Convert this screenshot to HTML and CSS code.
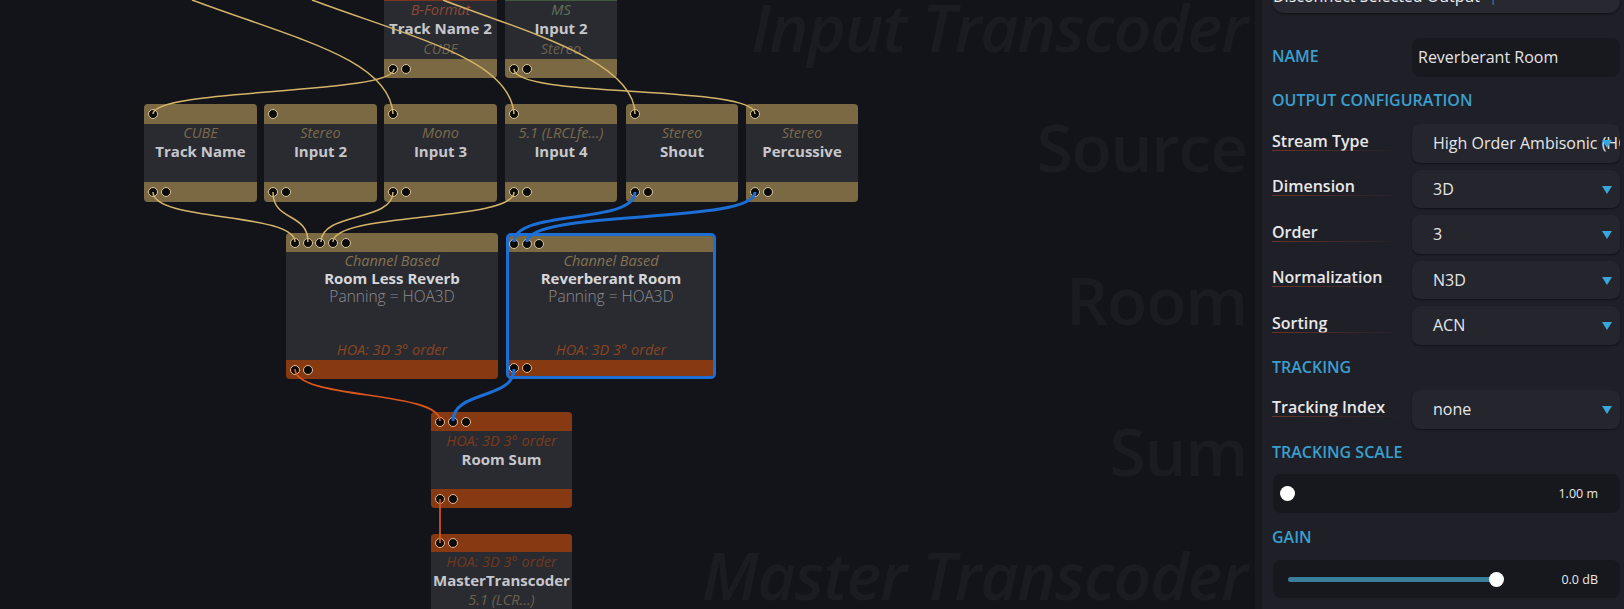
FILE: index.html
```html
<!DOCTYPE html>
<html>
<head>
<meta charset="utf-8">
<title>Graph</title>
<link rel="stylesheet" href="styles.css">
</head>
<body>
<div class="app">
  <div class="canvas">
    <div class="lane lane-input it">Input Transcoder</div>
    <div class="lane lane-source">Source</div>
    <div class="lane lane-room">Room</div>
    <div class="lane lane-sum">Sum</div>
    <div class="lane lane-master it">Master Transcoder</div>

    <!-- row 1: input transcoders -->
    <div class="node w-s h-top p-t1">
      <div class="bar bar-top hoa"></div>
      <div class="body">
        <div class="fmt c-red">B-Format</div>
        <div class="title">Track Name 2</div>
        <div class="fmt c-out out-line">CUBE</div>
      </div>
      <div class="bar bar-bot"><i class="port"></i><i class="port"></i></div>
    </div>
    <div class="node w-s2 h-top p-t2">
      <div class="bar bar-top green"></div>
      <div class="body">
        <div class="fmt c-green">MS</div>
        <div class="title">Input 2</div>
        <div class="fmt c-out out-line">Stereo</div>
      </div>
      <div class="bar bar-bot"><i class="port"></i><i class="port"></i></div>
    </div>

    <!-- row 2: sources -->
    <div class="node w-s h-src p-s1">
      <div class="bar"><i class="port"></i></div>
      <div class="body"><div class="fmt">CUBE</div><div class="title">Track Name</div></div>
      <div class="bar"><i class="port"></i><i class="port"></i></div>
    </div>
    <div class="node w-s h-src p-s2">
      <div class="bar"><i class="port"></i></div>
      <div class="body"><div class="fmt">Stereo</div><div class="title">Input 2</div></div>
      <div class="bar"><i class="port"></i><i class="port"></i></div>
    </div>
    <div class="node w-s h-src p-s3">
      <div class="bar"><i class="port"></i></div>
      <div class="body"><div class="fmt">Mono</div><div class="title">Input 3</div></div>
      <div class="bar"><i class="port"></i><i class="port"></i></div>
    </div>
    <div class="node w-s2 h-src p-s4">
      <div class="bar"><i class="port"></i></div>
      <div class="body"><div class="fmt">5.1 (LRCLfe...)</div><div class="title">Input 4</div></div>
      <div class="bar"><i class="port"></i><i class="port"></i></div>
    </div>
    <div class="node w-s2 h-src p-s5">
      <div class="bar"><i class="port"></i></div>
      <div class="body"><div class="fmt">Stereo</div><div class="title">Shout</div></div>
      <div class="bar"><i class="port"></i><i class="port"></i></div>
    </div>
    <div class="node w-s2 h-src p-s6">
      <div class="bar"><i class="port"></i></div>
      <div class="body"><div class="fmt">Stereo</div><div class="title">Percussive</div></div>
      <div class="bar"><i class="port"></i><i class="port"></i></div>
    </div>

    <!-- row 3: rooms -->
    <div class="node room p-r1">
      <div class="bar bar-19 tight"><i class="port"></i><i class="port"></i><i class="port"></i><i class="port"></i><i class="port"></i></div>
      <div class="body">
        <div class="fmt c-ch">Channel Based</div>
        <div class="title bright t-room">Room Less Reverb</div>
        <div class="pan">Panning = HOA3D</div>
        <div class="fmt c-hoa bottom">HOA: 3D 3° order</div>
      </div>
      <div class="bar bar-19 hoa"><i class="port hp"></i><i class="port hp"></i></div>
    </div>
    <div class="node room selected p-r2">
      <div class="bar bar-16 tight"><i class="port"></i><i class="port"></i><i class="port"></i></div>
      <div class="body">
        <div class="fmt c-ch">Channel Based</div>
        <div class="title bright t-room">Reverberant Room</div>
        <div class="pan">Panning = HOA3D</div>
        <div class="fmt c-hoa bottom">HOA: 3D 3° order</div>
      </div>
      <div class="bar bar-16 hoa"><i class="port hp"></i><i class="port hp"></i></div>
    </div>

    <!-- row 4: sum -->
    <div class="node sum p-sum">
      <div class="bar bar-19 hoa"><i class="port hp"></i><i class="port hp"></i><i class="port hp"></i></div>
      <div class="body">
        <div class="fmt c-hoa2 lh19">HOA: 3D 3° order</div>
        <div class="title">Room Sum</div>
      </div>
      <div class="bar bar-19 hoa"><i class="port hp"></i><i class="port hp"></i></div>
    </div>

    <!-- row 5: master -->
    <div class="node master p-master">
      <div class="bar bar-18 hoa"><i class="port hp"></i><i class="port hp"></i></div>
      <div class="body">
        <div class="fmt c-hoa3 lh19">HOA: 3D 3° order</div>
        <div class="title lh19">MasterTranscoder</div>
        <div class="fmt c-out lh19">5.1 (LCR...)</div>
      </div>
    </div>

    <svg class="wires" width="1255" height="609" viewBox="0 0 1255 609">
      <g fill="none" stroke="#d4b469" stroke-width="1.5">
        <path d="M192,0 C300,40 390,60 393,114"/>
        <path d="M312,0 C420,40 510,60 514,114"/>
        <path d="M443,0 C520,30 635,60 635,114"/>
        <path d="M394,69 C394,95 153,88 153,114"/>
        <path d="M514,69 C514,99 755,84 755,114"/>
        <path d="M153,192 C153,222 295,212 295,242"/>
        <path d="M273,192 C273,222 308,212 308,242"/>
        <path d="M393,192 C393,222 321,212 321,242"/>
        <path d="M514,192 C514,222 333,212 333,242"/>
      </g>
      <g fill="none" stroke="#1c6fd6" stroke-width="3">
        <path d="M635,192 C635,225 514,209 514,242"/>
        <path d="M755,192 C755,225 527,209 527,242"/>
        <path d="M514,369 C514,400 453,390 453,421"/>
      </g>
      <g fill="none" stroke="#d9561e" stroke-width="1.7">
        <path d="M295,369 C295,400 440,390 440,421"/>
        <path d="M440,499 L440,543"/>
      </g>
    </svg>
  </div>

  <aside class="panel">
    <div class="disconnect">Disconnect Selected Output <span class="caret">|</span></div>

    <div class="row name-row">
      <div class="sec">NAME</div>
      <div class="input">Reverberant Room</div>
    </div>

    <div class="sec sec-oc">OUTPUT CONFIGURATION</div>

    <div class="row first">
      <div class="label">Stream Type</div>
      <div class="select"><span>High Order Ambisonic (HOA)</span><i class="tri"></i></div>
    </div>
    <div class="row">
      <div class="label">Dimension</div>
      <div class="select"><span>3D</span><i class="tri"></i></div>
    </div>
    <div class="row">
      <div class="label">Order</div>
      <div class="select"><span>3</span><i class="tri"></i></div>
    </div>
    <div class="row">
      <div class="label">Normalization</div>
      <div class="select"><span>N3D</span><i class="tri"></i></div>
    </div>
    <div class="row">
      <div class="label">Sorting</div>
      <div class="select"><span>ACN</span><i class="tri"></i></div>
    </div>

    <div class="sec sec-tr">TRACKING</div>
    <div class="row first-tr">
      <div class="label">Tracking Index</div>
      <div class="select"><span>none</span><i class="tri"></i></div>
    </div>

    <div class="sec sec-ts">TRACKING SCALE</div>
    <div class="slider s-scale">
      <div class="track"><i class="knob" style="left:0px"></i></div>
      <div class="val">1.00 m</div>
    </div>

    <div class="sec sec-gain">GAIN</div>
    <div class="slider s-gain">
      <div class="track"><i class="fill" style="width:209px"></i><i class="knob" style="left:209px"></i></div>
      <div class="val">0.0 dB</div>
    </div>
  </aside>
</div>
</body>
</html>
```

FILE: styles.css
```css
* { box-sizing: border-box; }
html, body { margin: 0; padding: 0; }
body {
  background: #131419;
  font-family: "Open Sans", "Noto Sans", sans-serif;
  overflow: hidden;
}
.app {
  display: flex;
  width: 1624px;
  height: 609px;
  overflow: hidden;
}

/* ---------- canvas ---------- */
.canvas {
  position: relative;
  flex: 0 0 1255px;
  height: 609px;
  overflow: hidden;
  background: #131419;
}
.lane {
  position: absolute;
  right: 8px;
  font-size: 66px;
  font-weight: 600;
  line-height: 68px;
  color: #1b1c22;
  white-space: nowrap;
  letter-spacing: -1.2px;
}
.lane.it { font-style: italic; }
.lane-input { top: -8px; }
.lane-source { top: 112px; }
.lane-room { top: 265px; }
.lane-sum { top: 416px; }
.lane-master { top: 540px; }

.wires {
  position: absolute;
  left: 0;
  top: 0;
  pointer-events: none;
}

.node {
  position: absolute;
  display: flex;
  flex-direction: column;
  border-radius: 4px;
  overflow: hidden;
  background: #2a2b30;
}
.w-s { width: 113px; }
.w-s2 { width: 112px; }
.h-src { height: 98px; }
.h-top { height: 97px; }

.p-t1 { left: 384px; top: -19px; }
.p-t2 { left: 505px; top: -19px; }
.p-s1 { left: 144px; top: 104px; }
.p-s2 { left: 264px; top: 104px; }
.p-s3 { left: 384px; top: 104px; }
.p-s4 { left: 505px; top: 104px; }
.p-s5 { left: 626px; top: 104px; }
.p-s6 { left: 746px; top: 104px; }
.p-r1 { left: 286px; top: 233px; width: 212px; height: 146px; }
.p-r2 { left: 506px; top: 233px; width: 210px; height: 146px; }
.p-sum { left: 431px; top: 412px; width: 141px; height: 96px; }
.p-master { left: 431px; top: 534px; width: 141px; height: 100px; }

.bar {
  flex: 0 0 20px;
  display: flex;
  align-items: center;
  gap: 3px;
  padding-left: 4px;
  background: #7b6944;
}
.bar-top { flex-basis: 20px; }
.bar-bot { flex-basis: 19px; }
.bar-19 { flex-basis: 19px; }
.bar-18 { flex-basis: 18px; }
.bar-16 { flex-basis: 16px; }
.bar.tight { gap: 2.7px; }
.bar.hoa { background: #873a12; }
.bar.green { background: #3f5a3c; }
.bar-top.hoa { background: #7a3422; }

.selected {
  border: 3px solid #1d6fd6;
  border-radius: 5px;
}
.selected .bar { padding-left: 0; }

.port {
  display: block;
  width: 10px;
  height: 10px;
  border-radius: 50%;
  background: #0a0a0b;
  border: 1.5px solid #d8c79e;
  flex: 0 0 10px;
}
.port.hp { border-color: #e8b898; }

.body {
  flex: 1;
  display: flex;
  flex-direction: column;
  align-items: center;
  text-align: center;
  min-height: 0;
}
.fmt {
  font-style: italic;
  font-size: 14.5px;
  line-height: 18px;
  color: #7a6a4b;
  white-space: nowrap;
}
.title {
  font-weight: 700;
  font-size: 15px;
  line-height: 18px;
  color: #c6c7cc;
  white-space: nowrap;
}
.title.bright { color: #d6d7db; }
.t-room { line-height: 16px; margin-bottom: 1px; }
.pan {
  font-size: 15.5px;
  line-height: 19px;
  color: #8c8d93;
  font-weight: 300;
  white-space: nowrap;
}
.lh19 { line-height: 19px; }
.c-red { color: #8c4937; }
.c-green { color: #5b7458; }
.c-out { color: #6a6150; }
.c-ch { color: #857250; }
.c-hoa { color: #8a4520; }
.c-hoa2 { color: #7c3a1c; }
.c-hoa3 { color: #70391f; }
.out-line { margin-top: auto; margin-bottom: 1px; }
.bottom { margin-top: auto; margin-bottom: 1px; }

/* ---------- side panel ---------- */
.panel {
  flex: 0 0 369px;
  width: 369px;
  min-width: 0;
  overflow: hidden;
  background: #1f2027;
  border-left: 7px solid #191a1f;
  padding: 0 4px 0 10px;
  display: flex;
  flex-direction: column;
  color: #e6e6e8;
}
.disconnect {
  margin-top: -25px;
  height: 38px;
  flex: 0 0 38px;
  border-radius: 12px;
  background: #272830;
  box-shadow: 0 1px 2px rgba(0,0,0,0.5);
  font-size: 16px;
  line-height: 34px;
  padding-top: 4px;
  padding-left: 1px;
  color: #f0f0f2;
  white-space: nowrap;
  overflow: hidden;
}
.caret { font-size: 10px; color: #9a9aa0; margin-left: 6px; }

.sec {
  font-size: 16px;
  font-weight: 600;
  line-height: 22px;
  color: #3a9fcd;
  white-space: nowrap;
}
.sec-oc { margin-top: 12px; }
.sec-tr { margin-top: 11.5px; }
.sec-ts { margin-top: 12.5px; }
.sec-gain { margin-top: 13px; }

.row {
  display: flex;
  align-items: center;
  min-width: 0;
  height: 38.5px;
  flex: 0 0 38.5px;
  margin-top: 7px;
}
.row.first { margin-top: 13px; }
.row.first-tr { margin-top: 12px; }
.name-row { margin-top: 25px; height: 39px; flex-basis: 39px; }
.name-row .sec { width: 140px; flex: 0 0 140px; margin-top: -4px; }

.label {
  position: relative;
  flex: 0 0 140px;
  font-size: 16px;
  font-weight: 600;
  line-height: 20px;
  margin-top: -5px;
  color: #e8e8ea;
  white-space: nowrap;
}
.label::after {
  content: "";
  position: absolute;
  left: 0;
  bottom: 0;
  width: 128px;
  height: 1px;
  background: linear-gradient(to right, #6b3326, rgba(107, 51, 38, 0));
}

.input {
  flex: 1 1 0;
  min-width: 0;
  height: 100%;
  background: #18191e;
  border-radius: 8px;
  font-size: 16px;
  line-height: 39px;
  padding-left: 6px;
  color: #e4e4e6;
  white-space: nowrap;
  overflow: hidden;
}
.select {
  position: relative;
  flex: 1 1 0;
  min-width: 0;
  height: 100%;
  background: #24252d;
  border-radius: 8px;
  box-shadow: 0 1px 2px rgba(0,0,0,0.45);
  overflow: hidden;
  font-size: 16px;
  line-height: 38px;
  padding-left: 21px;
  color: #e6e6e8;
  white-space: nowrap;
}
.tri {
  position: absolute;
  right: 8px;
  top: 16px;
  width: 0;
  height: 0;
  border-left: 5.5px solid transparent;
  border-right: 5.5px solid transparent;
  border-top: 8px solid #39a6dc;
}

.slider {
  display: flex;
  align-items: center;
  margin-left: 1px;
  height: 39px;
  flex: 0 0 39px;
  background: #17181d;
  border-radius: 8px;
  padding: 0 22px 0 7px;
}
.s-scale { margin-top: 11px; }
.s-gain { margin-top: 12px; height: 38px; flex-basis: 38px; }
.track {
  position: relative;
  flex: 1;
  height: 15px;
}
.fill {
  position: absolute;
  left: 8px;
  top: 5px;
  height: 5px;
  border-radius: 3px;
  background: #3b7e9b;
}
.knob {
  position: absolute;
  top: 0;
  width: 15px;
  height: 15px;
  border-radius: 50%;
  background: #ffffff;
}
.val {
  font-size: 12.5px;
  color: #e8e8ea;
  white-space: nowrap;
}
```
